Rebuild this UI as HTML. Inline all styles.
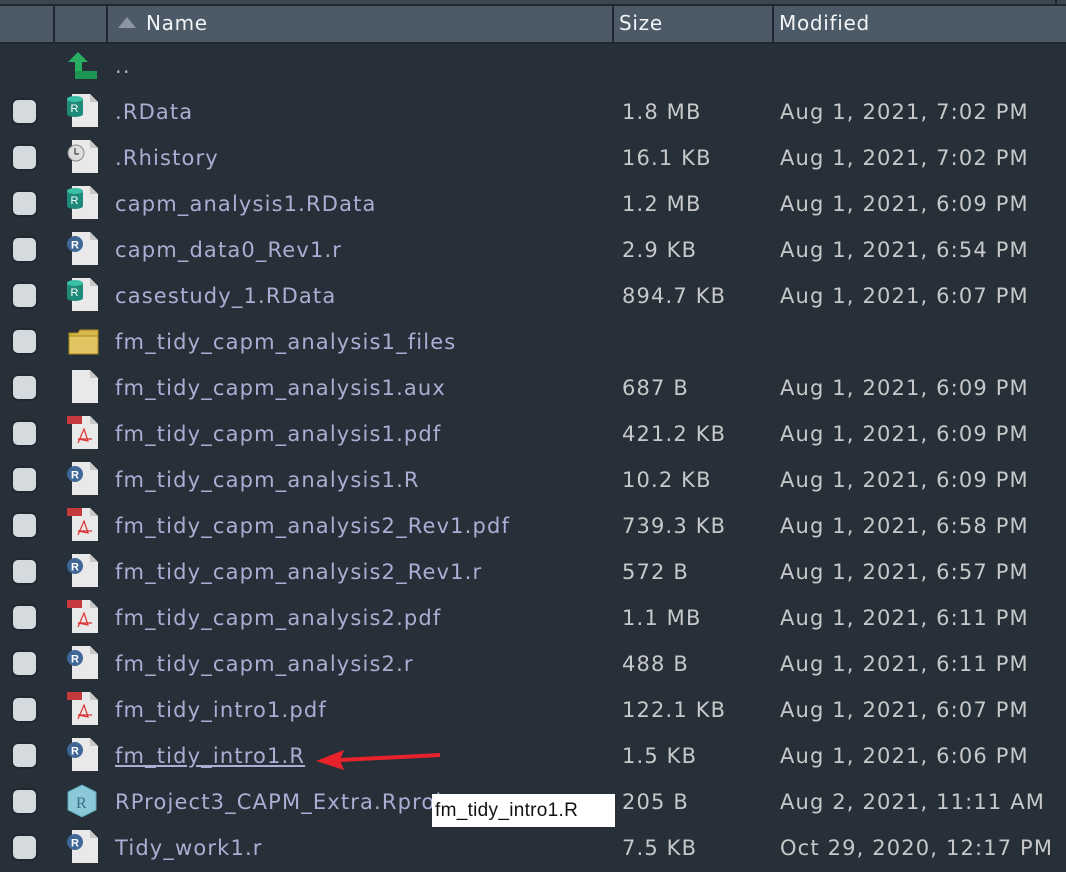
<!DOCTYPE html>
<html><head><meta charset="utf-8"><style>
body{margin:0;width:1066px;height:870px;background:#273038;overflow:hidden;font-family:"DejaVu Sans","Liberation Sans",sans-serif;position:relative}
.hdr{position:absolute;left:0;top:0;width:1066px;height:44px;background:#4c5966;border-top:5px solid #3b4651;box-sizing:border-box}
.hdr:before{content:"";position:absolute;left:0;right:0;top:-1px;height:2px;background:#1f2830}
.hdr:after{content:"";position:absolute;left:0;right:0;bottom:0;height:2px;background:#1f2830}
.vl{position:absolute;top:4px;height:40px;width:2px;background:#1f2830}
.ht{position:absolute;top:11px;color:#f2f4f6;font-size:20px;letter-spacing:0.7px}
.row{position:absolute;left:0;width:1066px;height:46px}
.cb{position:absolute;left:13px;top:10px;width:23px;height:23px;border-radius:5px;background:#d5dade;box-shadow:0 0 0 2px #1f2a33}
.ic{position:absolute;left:64px;top:3px}
.nm,.sz,.md{position:absolute;top:10px;font-size:21px;white-space:nowrap;letter-spacing:1.15px}
.nm{left:115px;color:#adadd4}
.sz{left:622px;color:#c6c8ca}
.md{left:780px;color:#c6c8ca}
</style></head><body>
<svg width="0" height="0" style="position:absolute"><defs>
<g id="doc"><path d="M8 1H26L34 9V34H8Z" fill="#e9e9e9"/><path d="M26 1V9H34Z" fill="#c8c8c8"/></g>
<g id="rd"><use href="#doc"/><rect x="3" y="6" width="16" height="15" fill="#1f8a78"/><ellipse cx="11" cy="21" rx="8" ry="3" fill="#1f8a78"/><ellipse cx="11" cy="6" rx="8" ry="3" fill="#3cc0a5"/><text x="6.5" y="19" font-size="11" fill="#fff" font-family="Liberation Sans">R</text></g>
<g id="rf"><use href="#doc"/><circle cx="11" cy="13" r="8" fill="#3f6796"/><text x="7" y="17.5" font-size="11" font-weight="bold" fill="#fff" font-family="Liberation Sans">R</text></g>
<g id="pdf"><use href="#doc"/><rect x="3" y="1" width="15" height="8" fill="#c6393c"/><path d="M14 28L20 14L24 26L14 24L28 24" stroke="#d33" stroke-width="1.2" fill="none"/></g>
</defs></svg>
<div class="hdr"></div>
<div class="vl" style="left:53px"></div><div class="vl" style="left:106px"></div><div class="vl" style="left:612px"></div><div class="vl" style="left:772px"></div><div class="vl" style="left:1055px;top:0;height:6px"></div>
<div style="position:absolute;left:118px;top:17px;width:0;height:0;border-left:9px solid transparent;border-right:9px solid transparent;border-bottom:11px solid #8c96a1"></div>
<div class="ht" style="left:146px">Name</div><div class="ht" style="left:619px">Size</div><div class="ht" style="left:779px">Modified</div>

<div class="row" style="top:44px"><svg class="ic" width="36" height="36" style="top:7px"><path d="M4 11L14 1L24 11H18V20H33V28H11V11Z" fill="#27ae60"/><path d="M11 20H33V28H11Z" fill="#1e9552"/></svg><div class="nm">..</div></div>

<div class="row" style="top:90px"><div class="cb"></div><svg class="ic" width="36" height="36"><use href="#rd"/></svg><div class="nm">.RData</div><div class="sz">1.8 MB</div><div class="md">Aug 1, 2021, 7:02 PM</div></div>
<div class="row" style="top:136px"><div class="cb"></div><svg class="ic" width="36" height="36"><use href="#doc"/><circle cx="12" cy="14" r="8" fill="#ddd" stroke="#888"/><path d="M11 9V15H15" stroke="#222" fill="none"/></svg><div class="nm">.Rhistory</div><div class="sz">16.1 KB</div><div class="md">Aug 1, 2021, 7:02 PM</div></div>
<div class="row" style="top:182px"><div class="cb"></div><svg class="ic" width="36" height="36"><use href="#rd"/></svg><div class="nm">capm_analysis1.RData</div><div class="sz">1.2 MB</div><div class="md">Aug 1, 2021, 6:09 PM</div></div>
<div class="row" style="top:228px"><div class="cb"></div><svg class="ic" width="36" height="36"><use href="#rf"/></svg><div class="nm">capm_data0_Rev1.r</div><div class="sz">2.9 KB</div><div class="md">Aug 1, 2021, 6:54 PM</div></div>
<div class="row" style="top:274px"><div class="cb"></div><svg class="ic" width="36" height="36"><use href="#rd"/></svg><div class="nm">casestudy_1.RData</div><div class="sz">894.7 KB</div><div class="md">Aug 1, 2021, 6:07 PM</div></div>
<div class="row" style="top:320px"><div class="cb"></div><svg class="ic" width="36" height="36"><path d="M5 10H14L16 7H34V31H5Z" fill="#d8b84a" stroke="#a88a1e"/><rect x="5" y="13" width="29" height="18" fill="#e2c462" stroke="#a88a1e"/></svg><div class="nm">fm_tidy_capm_analysis1_files</div></div>
<div class="row" style="top:366px"><div class="cb"></div><svg class="ic" width="36" height="36"><use href="#doc"/></svg><div class="nm">fm_tidy_capm_analysis1.aux</div><div class="sz">687 B</div><div class="md">Aug 1, 2021, 6:09 PM</div></div>
<div class="row" style="top:412px"><div class="cb"></div><svg class="ic" width="36" height="36"><use href="#pdf"/></svg><div class="nm">fm_tidy_capm_analysis1.pdf</div><div class="sz">421.2 KB</div><div class="md">Aug 1, 2021, 6:09 PM</div></div>
<div class="row" style="top:458px"><div class="cb"></div><svg class="ic" width="36" height="36"><use href="#rf"/></svg><div class="nm">fm_tidy_capm_analysis1.R</div><div class="sz">10.2 KB</div><div class="md">Aug 1, 2021, 6:09 PM</div></div>
<div class="row" style="top:504px"><div class="cb"></div><svg class="ic" width="36" height="36"><use href="#pdf"/></svg><div class="nm">fm_tidy_capm_analysis2_Rev1.pdf</div><div class="sz">739.3 KB</div><div class="md">Aug 1, 2021, 6:58 PM</div></div>
<div class="row" style="top:550px"><div class="cb"></div><svg class="ic" width="36" height="36"><use href="#rf"/></svg><div class="nm">fm_tidy_capm_analysis2_Rev1.r</div><div class="sz">572 B</div><div class="md">Aug 1, 2021, 6:57 PM</div></div>
<div class="row" style="top:596px"><div class="cb"></div><svg class="ic" width="36" height="36"><use href="#pdf"/></svg><div class="nm">fm_tidy_capm_analysis2.pdf</div><div class="sz">1.1 MB</div><div class="md">Aug 1, 2021, 6:11 PM</div></div>
<div class="row" style="top:642px"><div class="cb"></div><svg class="ic" width="36" height="36"><use href="#rf"/></svg><div class="nm">fm_tidy_capm_analysis2.r</div><div class="sz">488 B</div><div class="md">Aug 1, 2021, 6:11 PM</div></div>
<div class="row" style="top:688px"><div class="cb"></div><svg class="ic" width="36" height="36"><use href="#pdf"/></svg><div class="nm">fm_tidy_intro1.pdf</div><div class="sz">122.1 KB</div><div class="md">Aug 1, 2021, 6:07 PM</div></div>
<div class="row" style="top:734px"><div class="cb"></div><svg class="ic" width="36" height="36"><use href="#rf"/></svg><div class="nm" style="text-decoration:underline">fm_tidy_intro1.R</div><div class="sz">1.5 KB</div><div class="md">Aug 1, 2021, 6:06 PM</div></div>
<div class="row" style="top:780px"><div class="cb"></div><svg class="ic" width="36" height="36"><path d="M4 9L18 2L32 9V27L18 34L4 27Z" fill="#8cc8d8" stroke="#5aa8bd"/><text x="12" y="25" font-size="16" fill="#3a6f88" font-family="Liberation Serif">R</text></svg><div class="nm">RProject3_CAPM_Extra.Rproj</div><div class="sz">205 B</div><div class="md">Aug 2, 2021, 11:11 AM</div></div>
<div class="row" style="top:826px"><div class="cb"></div><svg class="ic" width="36" height="36"><use href="#rf"/></svg><div class="nm">Tidy_work1.r</div><div class="sz">7.5 KB</div><div class="md">Oct 29, 2020, 12:17 PM</div></div>

<div style="position:absolute;left:432px;top:794px;width:183px;height:33px;background:#fff;color:#111;font-size:19px;line-height:33px;padding-left:3px;box-sizing:border-box;white-space:nowrap;overflow:hidden;font-family:'Liberation Sans',sans-serif;letter-spacing:0.3px">fm_tidy_intro1.R</div>
<svg style="position:absolute;left:310px;top:745px" width="135" height="30"><path d="M130 10L30 15" stroke="#e8222a" stroke-width="4"/><path d="M6 16L34 5L30 15L34 25Z" fill="#e8222a"/></svg>
</body></html>
